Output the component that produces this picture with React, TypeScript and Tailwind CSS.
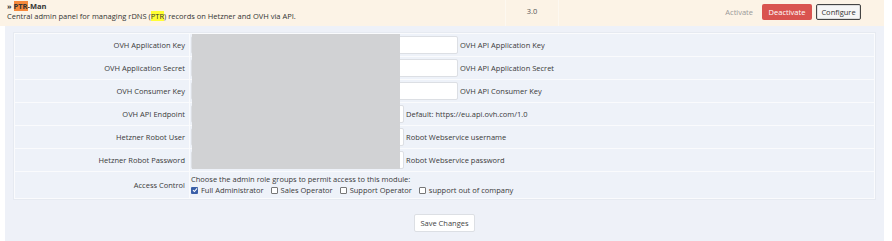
import type { ReactNode } from 'react';

const font = { fontFamily: '"Open Sans", "Liberation Sans", sans-serif' };

function Row({
  label,
  wide,
  note,
}: {
  label: string;
  wide?: boolean;
  note: string;
}) {
  return (
    <div className="flex h-[23px] border-b border-[#fafbfd]">
      <div className="flex w-[175px] shrink-0 items-center justify-end border-r border-[#fafbfd] pr-[4px] text-[#3a3a3a]">
        {label}
      </div>
      <div className="flex items-center pl-[1px]">
        <div
          className={`h-[18px] rounded-[2px] border border-[#dcdfe4] bg-white ${
            wide ? 'w-[267px]' : 'w-[213px]'
          }`}
        />
        <span className="ml-[2px] text-[#3a3a3a]">{note}</span>
      </div>
    </div>
  );
}

function Check({ checked, children }: { checked?: boolean; children: ReactNode }) {
  return (
    <label className="mr-[7px] flex items-center gap-[3px]">
      {checked ? (
        <span className="flex h-[7px] w-[7px] items-center justify-center rounded-[1px] bg-[#3a5fa8]">
          <svg viewBox="0 0 8 8" className="h-[6px] w-[6px]">
            <path d="M1.3 4.2 L3.2 6 L6.8 1.8" fill="none" stroke="white" strokeWidth="1.4" />
          </svg>
        </span>
      ) : (
        <span className="h-[7px] w-[7px] rounded-[1px] border border-[#777] bg-white" />
      )}
      <span>{children}</span>
    </label>
  );
}

export default function App() {
  return (
    <div className="h-[241px] w-[892px] overflow-hidden bg-white text-[7.5px] leading-[10px]" style={font}>
      {/* Module header row */}
      <div className="flex h-[26px] w-[884px] bg-[#fcf3e6]">
        <div className="w-[505px] pl-[7px] pt-[1px]">
          <div className="text-[#333]">
            <span className="font-bold">» </span>
            <span className="bg-[#f6883a] font-bold">PTR</span>
            <span className="font-bold">-Man</span>
          </div>
          <div className="text-[#333]">
            Central admin panel for managing rDNS (<span className="bg-[#ffff33]">PTR</span>) records on Hetzner and OVH via API.
          </div>
        </div>
        <div className="flex w-[54px] items-start justify-center border-x border-[#fdf8f0] pt-[6px] text-[#555]">
          3.0
        </div>
        <div className="flex flex-1 items-start justify-end gap-[4px] pr-[23px] pt-[4px]">
          <span className="mr-[5px] mt-[3px] text-[#999]">Activate</span>
          <button className="flex h-[16px] w-[50px] items-center justify-center rounded-[2px] bg-[#d9534f] text-white">
            Deactivate
          </button>
          <button className="flex h-[16px] w-[45px] items-center justify-center rounded-[2px] border border-[#444] bg-[#f6f6f6] text-[#333] shadow-[inset_0_0_0_1px_#ddd]">
            Configure
          </button>
        </div>
      </div>

      {/* Config panel */}
      <div className="ml-[5px] h-[215px] w-[879px] bg-[#eef1f8] px-[9px] pt-[7px]">
        <div className="relative w-[861px] border border-[#fafbfd] bg-[#eef2f9] shadow-[0_0_0_1px_#e6eaf1]">
          <Row label="OVH Application Key" wide note="OVH API Application Key" />
          <Row label="OVH Application Secret" wide note="OVH API Application Secret" />
          <Row label="OVH Consumer Key" wide note="OVH API Consumer Key" />
          <Row label="OVH API Endpoint" note="Default: https://eu.api.ovh.com/1.0" />
          <Row label="Hetzner Robot User" note="Robot Webservice username" />
          <Row label="Hetzner Robot Password" note="Robot Webservice password" />
          <div className="flex h-[26px]">
            <div className="flex w-[175px] shrink-0 items-center justify-end border-r border-[#fafbfd] pr-[4px] text-[#3a3a3a]">
              Access Control
            </div>
            <div className="pl-[1px] pt-[2px] text-[#3a3a3a]">
              <div>Choose the admin role groups to permit access to this module:</div>
              <div className="mt-[1px] flex items-center">
                <Check checked>Full Administrator</Check>
                <Check>Sales Operator</Check>
                <Check>Support Operator</Check>
                <Check>support out of company</Check>
              </div>
            </div>
          </div>
          {/* redacted area */}
          <div className="absolute left-[177px] top-0 h-[135px] w-[208px] bg-[#d1d2d4]" />
        </div>
        <div className="mt-[15px] flex justify-center">
          <button className="flex h-[18px] w-[61px] items-center justify-center rounded-[2px] border border-[#dcdfe4] bg-white text-[#444]">
            Save Changes
          </button>
        </div>
      </div>
    </div>
  );
}
